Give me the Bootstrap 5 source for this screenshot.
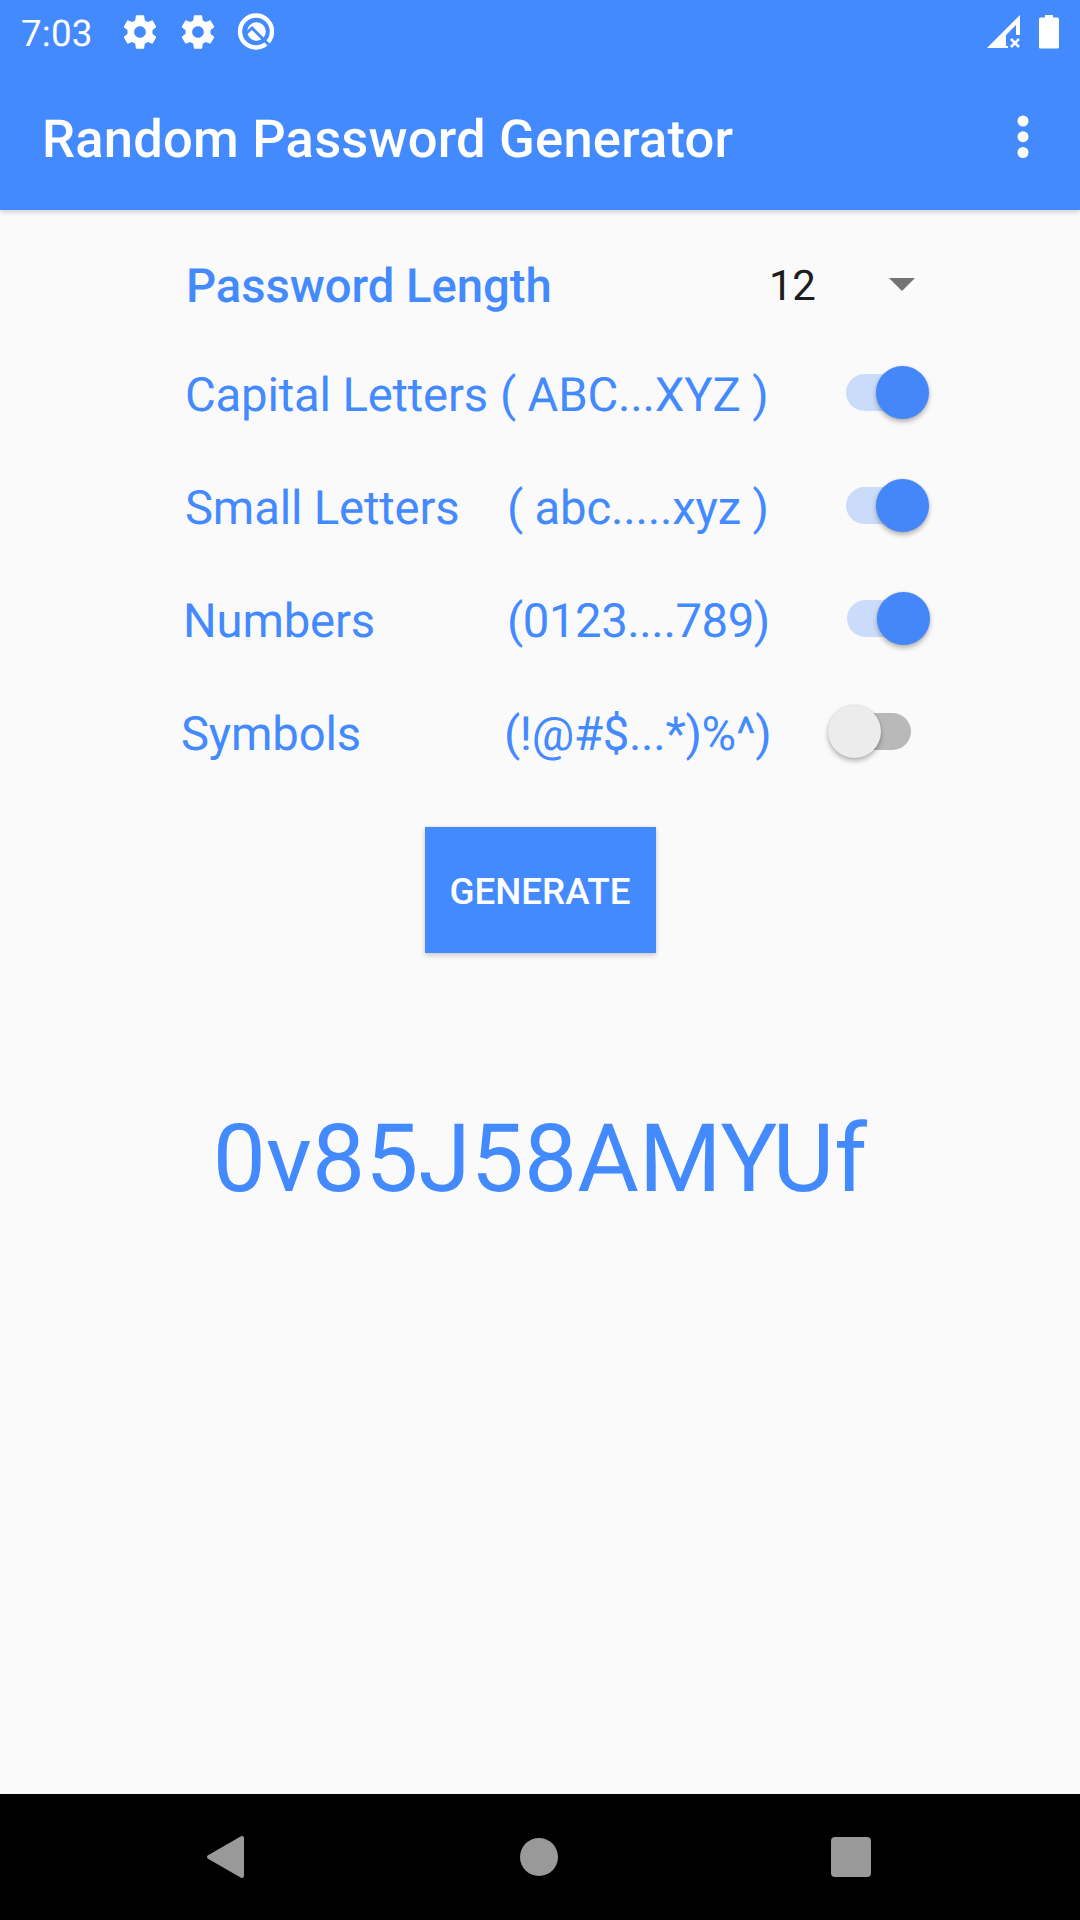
<!DOCTYPE html>
<html lang="en">
<head>
<meta charset="utf-8">
<meta name="viewport" content="width=device-width, initial-scale=1">
<title>Random Password Generator</title>
<link rel="stylesheet" href="https://cdn.jsdelivr.net/npm/bootstrap@5.3.0/dist/css/bootstrap.min.css">
<style>
  :root { --app-blue: #448aff; }
  body { width: 1080px; height: 1920px; background: #fafafa; font-family: Roboto, "Noto Sans", sans-serif; overflow: hidden; text-rendering: geometricPrecision; }
  svg { display: block; flex: none; }
  .app-head { background: var(--app-blue); height: 210px; box-shadow: 0 2px 5px rgba(0,0,0,.17); }
  .status-bar { height: 63px; padding: 0 16px 0 21px; }
  .clock { font-size: 36.75px; line-height: 61px; width: 99px; padding-top: 4px; letter-spacing: .2px; }
  .gear-second { margin: 0 15px 0 17px; }
  .title-bar { height: 147px; padding: 0 51.5px 0 42px; }
  .app-title { font-size: 52.5px; line-height: 62px; font-weight: 500; padding-top: 4px; letter-spacing: .21px; }
  .options { padding-top: 51px; color: #448aff; }
  .length-row { height: 50px; margin-bottom: 25px; padding: 0 165.5px 0 186px; }
  .length-label { font-size: 47.25px; line-height: 50px; font-weight: 500; width: 583px; letter-spacing: -.05px; }
  .length-select { font-size: 42px; line-height: 50px; color: #1d1d1d; width: 145.5px; }
  .length-select span { padding-top: 1px; letter-spacing: -.3px; }
  .length-select svg { margin-bottom: 3px; }
  .opt-row { height: 113px; font-size: 47.25px; line-height: 56px; padding-left: 185px; }
  .opt-row .toggle { margin-left: auto; margin-right: 151px; }
  .opt-name, .opt-sample { white-space: pre; flex: none; padding-top: 4px; letter-spacing: -.18px; }
  .opt-name { width: 322px; }
  .r1 .opt-name { width: 315px; }
  .r3 { padding-left: 183px; }
  .r3 .opt-name { width: 324px; }
  .r3 .opt-sample { letter-spacing: -.42px; }
  .r3 .toggle { margin-right: 150px; }
  .r4 { padding-left: 181px; }
  .r4 .opt-name { width: 323px; }
  .r4 .opt-sample { letter-spacing: -.3px; }
  .toggle { width: 101px; height: 53px; flex: none; position: relative; }
  .toggle::before { content: ""; position: absolute; left: 18px; top: 8px; width: 65px; height: 37px; border-radius: 19px; background: #b9b9b9; }
  .toggle::after { content: ""; position: absolute; left: 0; top: 0; width: 53px; height: 53px; border-radius: 50%; background: #ececec; box-shadow: 0 3px 5px rgba(0,0,0,.28), 0 0 2px rgba(0,0,0,.12); }
  .toggle.on::before { background: #cadcf9; }
  .toggle.on::after { left: 48px; background: #4487fb; }
  .btn-generate { width: 231px; height: 126px; margin-top: 39px; background: var(--app-blue); color: #fff; font-size: 36.75px; font-weight: 500; line-height: 43px; border: 0; border-radius: 0; padding: 2px 0 0; box-shadow: 0 3px 5px rgba(0,0,0,.15), 0 0 4px rgba(0,0,0,.08); }
  .result { font-size: 94.5px; line-height: 112px; margin-top: 151px; color: var(--app-blue); letter-spacing: .15px; }
  .nav-keys { height: 126px; background: #000; padding: 0 209px 0 206px; }
  .key-home { margin-left: 3px; }
</style>
<script src="https://cdn.jsdelivr.net/npm/bootstrap@5.3.0/dist/js/bootstrap.bundle.min.js"></script>
</head>
<body class="d-flex flex-column m-0">
<header class="app-head text-white flex-shrink-0">
  <div class="status-bar d-flex align-items-center">
    <div class="clock">7:03</div>
    <svg width="40" height="40" viewBox="0 0 24 24" fill="#fff"><path id="gear" d="M19.43 12.98c.04-.32.07-.64.07-.98s-.03-.66-.07-.98l2.11-1.65c.19-.15.24-.42.12-.64l-2-3.46c-.12-.22-.39-.3-.61-.22l-2.49 1c-.52-.4-1.08-.73-1.69-.98l-.38-2.65C14.46 2.18 14.25 2 14 2h-4c-.25 0-.46.18-.49.42l-.38 2.65c-.61.25-1.17.59-1.69.98l-2.49-1c-.23-.09-.49 0-.61.22l-2 3.46c-.13.22-.07.49.12.64l2.11 1.65c-.04.32-.07.65-.07.98s.03.66.07.98l-2.11 1.65c-.19.15-.24.42-.12.64l2 3.46c.12.22.39.3.61.22l2.49-1c.52.4 1.08.73 1.69.98l.38 2.65c.03.24.24.42.49.42h4c.25 0 .46-.18.49-.42l.38-2.65c.61-.25 1.17-.59 1.69-.98l2.49 1c.23.09.49 0 .61-.22l2-3.46c.12-.22.07-.49-.12-.64l-2.11-1.65zM12 15.5c-1.93 0-3.5-1.57-3.5-3.5s1.57-3.5 3.5-3.5 3.5 1.57 3.5 3.5-1.57 3.5-3.5 3.5z"/></svg>
    <svg class="gear-second" width="42" height="40" viewBox="0 0 24 24" fill="#fff"><use href="#gear"/></svg>
    <svg width="44" height="44" viewBox="0 0 44 44"><circle cx="22" cy="21.500" r="16" fill="none" stroke="#fff" stroke-width="4.4"/><circle cx="22.5" cy="21.500" r="9.3" fill="#fff"/><path d="M12 23.500l6-5.500 17 17" fill="none" stroke="#448aff" stroke-width="3"/></svg>
    <svg class="ms-auto" width="80" height="44" viewBox="0 0 80 44"><path d="M3 38L36 5v20h-4V15L22 25v11l2 0v2z" fill="#fff"/><path d="M27 29l8 8m0-8l-8 8" stroke="#fff" stroke-width="2.6"/><path d="M61 5h8v2.500h4.500q1.500 0 1.500 1.500v28q0 1.500-1.500 1.500h-17q-1.500 0-1.500-1.500v-28q0-1.500 1.500-1.500H61z" fill="#fff"/></svg>
  </div>
  <div class="title-bar d-flex align-items-center justify-content-between">
    <h1 class="app-title m-0">Random Password Generator</h1>
    <svg width="12" height="44" viewBox="0 0 12 44" fill="#fff"><circle cx="6" cy="6" r="5.500"/><circle cx="6" cy="21.700" r="5.500"/><circle cx="6" cy="37.500" r="5.500"/></svg>
  </div>
</header>
<main class="flex-grow-1 d-flex flex-column">
  <section class="options">
    <div class="length-row d-flex align-items-center">
      <div class="length-label">Password Length</div>
      <div class="length-select d-flex align-items-center justify-content-between"><span>12</span><svg width="26" height="13" viewBox="0 0 26 13"><path d="M0 0h26L13 13z" fill="#737373"/></svg></div>
    </div>
    <div class="opt-row r1 d-flex align-items-center"><span class="opt-name">Capital Letters</span><span class="opt-sample">( ABC...XYZ )</span><span class="toggle on"></span></div>
    <div class="opt-row r2 d-flex align-items-center"><span class="opt-name">Small Letters</span><span class="opt-sample">( abc.....xyz )</span><span class="toggle on"></span></div>
    <div class="opt-row r3 d-flex align-items-center"><span class="opt-name">Numbers</span><span class="opt-sample">(0123....789)</span><span class="toggle on"></span></div>
    <div class="opt-row r4 d-flex align-items-center"><span class="opt-name">Symbols</span><span class="opt-sample">(!@#$...*)%^)</span><span class="toggle"></span></div>
  </section>
  <button class="btn btn-generate align-self-center">GENERATE</button>
  <div class="result text-center">0v85J58AMYUf</div>
</main>
<footer class="nav-keys flex-shrink-0 d-flex align-items-center justify-content-between">
  <svg width="38" height="44" viewBox="0 0 38 44"><path d="M3 22L36 3v38z" fill="#999" stroke="#999" stroke-width="4" stroke-linejoin="round"/></svg>
  <svg class="key-home" width="38" height="38" viewBox="0 0 38 38"><circle cx="19" cy="19" r="19" fill="#999"/></svg>
  <svg width="40" height="40" viewBox="0 0 40 40"><rect width="40" height="40" rx="4" fill="#999"/></svg>
</footer>
</body>
</html>
